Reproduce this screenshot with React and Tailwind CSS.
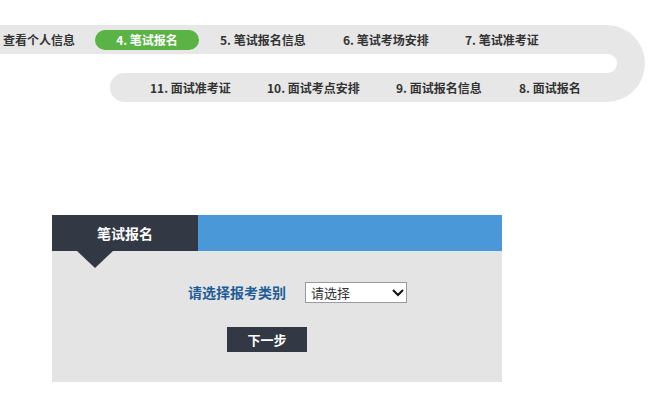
export default function App() {
  return (
    <div className="min-h-screen bg-white font-['Noto_Sans_CJK_SC',sans-serif] text-[#333]">
      {/* step path */}
      <div className="flex w-[645px] pt-[25px] text-[12px] font-bold">
        <div className="flex w-[606px] flex-col">
          <div className="flex h-[29px] items-center bg-[#e7e7e7]">
            <span className="ml-[3px] w-[92px]">查看个人信息</span>
            <span className="flex h-[20px] w-[104px] items-center justify-center rounded-full bg-[#5ab344] text-white">
              4. 笔试报名
            </span>
            <span className="ml-[21px] w-[123px]">5. 笔试报名信息</span>
            <span className="w-[122px]">6. 笔试考场安排</span>
            <span>7. 笔试准考证</span>
          </div>
          <div className="h-[19px]" />
          <div className="ml-[110px] flex h-[29px] items-center rounded-l-full bg-[#e7e7e7]">
            <span className="ml-[40px] w-[117px]">11. 面试准考证</span>
            <span className="w-[129px]">10. 面试考点安排</span>
            <span className="w-[123px]">9. 面试报名信息</span>
            <span>8. 面试报名</span>
          </div>
        </div>
        <div className="flex h-[77px] w-[39px] items-center rounded-r-full bg-[#e7e7e7]">
          <div className="h-[19px] w-[11px] rounded-r-full bg-white" />
        </div>
      </div>

      {/* form panel */}
      <div className="ml-[52px] mt-[113px] w-[450px] bg-[#e4e4e4] pb-[30px]">
        <div className="flex h-[36px] bg-[#4a98d8]">
          <div className="relative flex w-[146px] items-center justify-center bg-[#323844] text-[14px] font-bold text-white">
            笔试报名
            <span className="absolute left-[25px] top-full border-x-[18px] border-t-[17px] border-x-transparent border-t-[#323844]" />
          </div>
        </div>
        <div className="mt-[31px] flex items-center pl-[136px]">
          <span className="text-[14px] font-bold text-[#1f5d97]">请选择报考类别</span>
          <div className="relative ml-[19px]">
            <select className="block h-[21px] w-[102px] appearance-none border border-[#9a9a9a] bg-white pl-[5px] text-[13px] text-[#333]">
              <option>请选择</option>
            </select>
            <svg
              className="pointer-events-none absolute right-[3px] top-[7px]"
              width="12"
              height="8"
              viewBox="0 0 12 8"
              fill="none"
              stroke="#111"
              strokeWidth="2"
            >
              <polyline points="1,1 6,6 11,1" />
            </svg>
          </div>
        </div>
        <button className="ml-[175px] mt-[24px] block h-[25px] w-[80px] bg-[#323844] text-[13px] font-bold text-white">
          下一步
        </button>
      </div>
    </div>
  );
}
